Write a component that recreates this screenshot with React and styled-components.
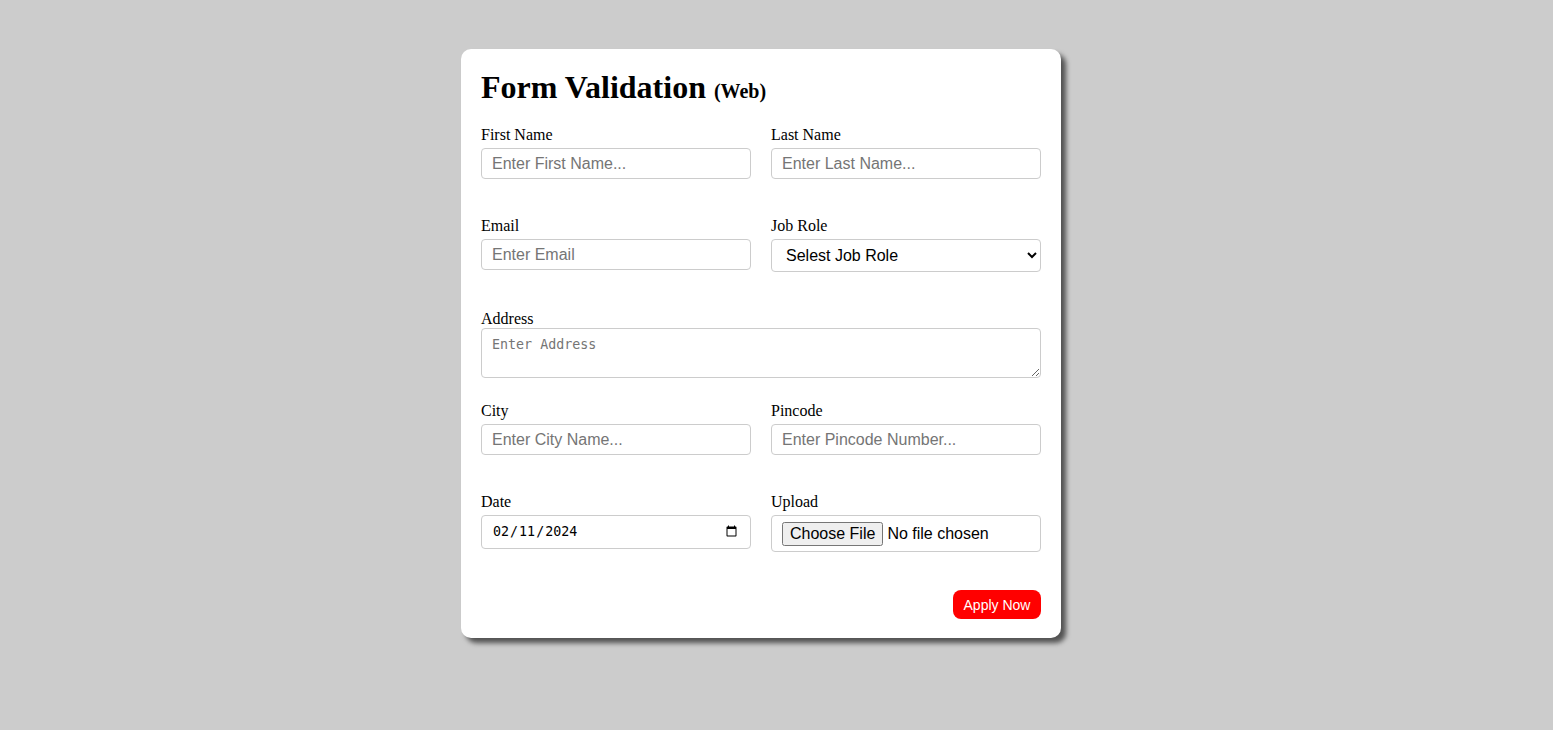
import React from "react";
import styled, { createGlobalStyle } from "styled-components";

const Global = createGlobalStyle`
  html, body { margin: 0; padding: 0; background: #cccccc; }
  body { font-family: "Liberation Serif", "Times New Roman", serif; }
`;

const Page = styled.div`
  display: flex;
  justify-content: center;
  align-items: flex-start;
  padding: 49px 31px 0 0;
  min-height: 730px;
  box-sizing: border-box;
`;

const Card = styled.form`
  width: 600px;
  box-sizing: border-box;
  background: #fff;
  border-radius: 10px;
  padding: 20px 20px 19px;
  box-shadow: 5px 5px 5px rgba(0, 0, 0, 0.6);
  font-family: "Liberation Serif", "Times New Roman", serif;
`;

const Title = styled.h1`
  margin: 0 0 20px;
  font-size: 32px;
  font-weight: bold;
  line-height: normal;
  color: #000;
`;

const Sub = styled.span`
  font-size: 20px;
`;

const Row = styled.div`
  display: grid;
  grid-template-columns: ${(p) => (p.$full ? "1fr" : "1fr 1fr")};
  align-items: start;
  column-gap: 20px;
  margin-bottom: ${(p) => p.$mb}px;
`;

const Field = styled.div`
  display: flex;
  flex-direction: column;
`;

const Label = styled.label`
  font-size: 16px;
  line-height: normal;
  color: #000;
  margin-bottom: ${(p) => (p.$tight ? 0 : 4)}px;
`;

const base = `
  box-sizing: border-box;
  width: 100%;
  border: 1px solid #cccccc;
  border-radius: 4px;
  background: #fff;
  color: #000;
  margin: 0;
  outline: none;
`;

const Input = styled.input`
  ${base}
  height: 31px;
  padding: 0 10px;
  font-family: "Liberation Sans", Arial, sans-serif;
  font-size: 16px;
  &::placeholder { color: #757575; }
`;

const DateInput = styled.input`
  ${base}
  height: 34px;
  padding: 0 10px;
  font-family: "DejaVu Sans Mono", monospace;
  font-size: 13.33px;
`;

const FileInput = styled.input`
  ${base}
  height: 37px;
  padding: 6px 10px 0;
  font-family: "Liberation Sans", Arial, sans-serif;
  font-size: 16px;
  &::file-selector-button {
    font-family: "Liberation Sans", Arial, sans-serif;
    font-size: 16px;
    margin-right: 4px;
  }
`;

const Select = styled.select`
  ${base}
  height: 33px;
  padding: 0 10px;
  font-family: "Liberation Sans", Arial, sans-serif;
  font-size: 16px;
`;

const TextArea = styled.textarea`
  ${base}
  height: 50px;
  padding: 8px 10px 10px;
  font-family: "DejaVu Sans Mono", monospace;
  font-size: 13.33px;
  &::placeholder { color: #757575; }
`;

const Actions = styled.div`
  display: flex;
  justify-content: flex-end;
`;

const Button = styled.button`
  height: 29px;
  width: 88px;
  border: none;
  border-radius: 8px;
  background: #ff0000;
  color: #fff;
  font-family: "Liberation Sans", Arial, sans-serif;
  font-size: 14px;
  cursor: pointer;
`;

export default function App() {
  return (
    <>
      <Global />
      <Page>
        <Card onSubmit={(e) => e.preventDefault()}>
          <Title>
            Form Validation <Sub>(Web)</Sub>
          </Title>
          <Row $mb={38}>
            <Field>
              <Label>First Name</Label>
              <Input placeholder="Enter First Name..." />
            </Field>
            <Field>
              <Label>Last Name</Label>
              <Input placeholder="Enter Last Name..." />
            </Field>
          </Row>
          <Row $mb={38}>
            <Field>
              <Label>Email</Label>
              <Input placeholder="Enter Email" />
            </Field>
            <Field>
              <Label>Job Role</Label>
              <Select defaultValue="">
                <option value="">Selest Job Role</option>
                <option value="fe">Frontend</option>
                <option value="be">Backend</option>
              </Select>
            </Field>
          </Row>
          <Row $full $mb={24}>
            <Field>
              <Label $tight>Address</Label>
              <TextArea placeholder="Enter Address" />
            </Field>
          </Row>
          <Row $mb={38}>
            <Field>
              <Label>City</Label>
              <Input placeholder="Enter City Name..." />
            </Field>
            <Field>
              <Label>Pincode</Label>
              <Input placeholder="Enter Pincode Number..." />
            </Field>
          </Row>
          <Row $mb={38}>
            <Field>
              <Label>Date</Label>
              <DateInput type="date" defaultValue="2024-02-11" />
            </Field>
            <Field>
              <Label>Upload</Label>
              <FileInput type="file" />
            </Field>
          </Row>
          <Actions>
            <Button type="submit">Apply Now</Button>
          </Actions>
        </Card>
      </Page>
    </>
  );
}
